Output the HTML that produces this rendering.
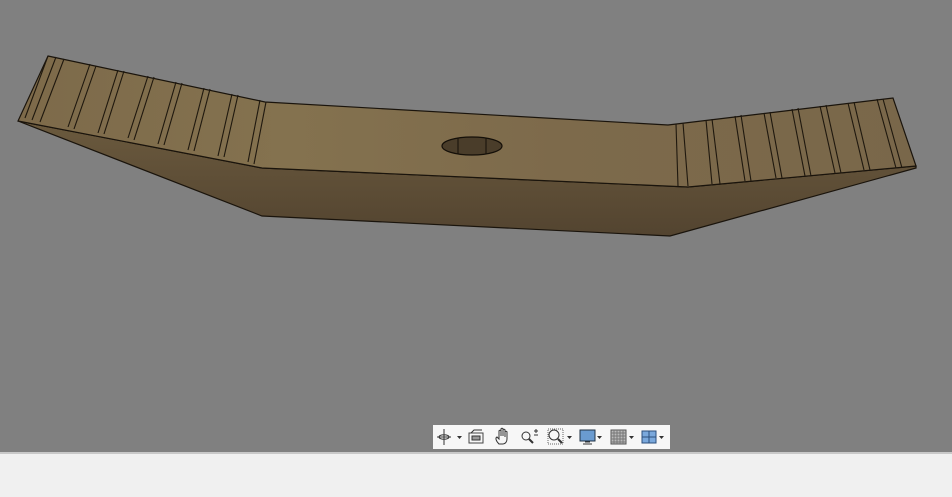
<!DOCTYPE html>
<html><head><meta charset="utf-8"><style>
html,body{margin:0;padding:0;width:952px;height:495px;overflow:hidden;background:#808080;font-family:"Liberation Sans",sans-serif}
#bar{position:absolute;left:0;top:452px;width:952px;height:43px;background:#f0f0f0;border-top:2px solid #c8c8c8}
#tb{position:absolute;left:433px;top:425px;width:237px;height:24px;background:#f7f7f7}
</style></head><body>
<svg width="952" height="452" style="position:absolute;left:0;top:0">
<defs>
<linearGradient id="tg" x1="0" y1="0" x2="1" y2="0">
<stop offset="0" stop-color="#7d6a4a"/><stop offset="0.3" stop-color="#84724f"/><stop offset="0.6" stop-color="#7d6a4b"/><stop offset="1" stop-color="#79674a"/></linearGradient>
<linearGradient id="fg" x1="0" y1="0" x2="0" y2="1">
<stop offset="0" stop-color="#6b5a3e"/><stop offset="1" stop-color="#534430"/></linearGradient>
</defs>
<polygon points="18,121 262,168 688,187 916,166 916,168 670,236 262,216" fill="url(#fg)" stroke="#1a140c" stroke-width="1.2"/>
<polygon points="48,56 265,102 668,125 893,98 916,166 688,187 262,168 18,121" fill="url(#tg)" stroke="#1a140c" stroke-width="1.2"/>
<g stroke="#1f180e" stroke-width="1.1" fill="none">
<line x1="48" y1="56" x2="25" y2="118"/>
<line x1="56" y1="57" x2="32" y2="120"/>
<line x1="64" y1="59" x2="40" y2="122"/>
<line x1="90" y1="64" x2="68" y2="127"/><line x1="96" y1="66" x2="74" y2="129"/>
<line x1="118" y1="70" x2="98" y2="133"/><line x1="124" y1="71" x2="104" y2="134"/>
<line x1="148" y1="76" x2="128" y2="138"/><line x1="154" y1="77" x2="134" y2="140"/>
<line x1="176" y1="82" x2="158" y2="144"/><line x1="182" y1="83" x2="164" y2="145"/>
<line x1="204" y1="88" x2="188" y2="150"/><line x1="210" y1="89" x2="194" y2="151"/>
<line x1="232" y1="94" x2="218" y2="156"/><line x1="238" y1="95" x2="224" y2="157"/>
<line x1="260" y1="100" x2="248" y2="162"/><line x1="266" y1="102" x2="254" y2="164"/>
<line x1="676" y1="124" x2="678" y2="186"/><line x1="683" y1="123" x2="688" y2="186"/>
<line x1="706" y1="120" x2="712" y2="184"/><line x1="712" y1="119" x2="720" y2="184"/>
<line x1="735" y1="116" x2="745" y2="181"/><line x1="741" y1="115" x2="751" y2="181"/>
<line x1="764" y1="113" x2="776" y2="178"/><line x1="770" y1="112" x2="782" y2="178"/>
<line x1="792" y1="109" x2="805" y2="176"/><line x1="798" y1="108" x2="811" y2="176"/>
<line x1="820" y1="106" x2="835" y2="173"/><line x1="826" y1="105" x2="841" y2="173"/>
<line x1="848" y1="103" x2="864" y2="170"/><line x1="854" y1="102" x2="870" y2="170"/>
<line x1="877" y1="99" x2="896" y2="168"/><line x1="883" y1="99" x2="902" y2="168"/>
</g>
<ellipse cx="472" cy="146" rx="30" ry="9" fill="#4a3d2a" stroke="#140f08" stroke-width="1.2"/>
<line x1="458" y1="138" x2="458" y2="154" stroke="#140f08"/>
<line x1="486" y1="138" x2="486" y2="154" stroke="#140f08"/>
</svg>
<div id="tb">
<svg width="237" height="24" style="position:absolute;left:0;top:0" fill="none" stroke="#333" stroke-width="1">
<path d="M11 4v16M4 12h14M6 12c0-3 10-3 10 0s-10 3-10 0"/><path d="M24 11l5 0-2.5 3z" fill="#333" stroke="none"/>
<rect x="36" y="8" width="14" height="10" stroke="#444"/><rect x="39" y="11" width="8" height="4" fill="#999"/><path d="M38 8l3-3h8" />
<path d="M66 19c-3-3-4-6-2-7l2 2v-8c0-1 2-1 2 0v5-7c0-1 2-1 2 0v7-6c0-1 2-1 2 0v7-5c0-1 2-1 2 0v7c0 3-2 5-4 5z"/>
<circle cx="93" cy="11" r="4"/><path d="M96 14l4 4" stroke-width="2"/><path d="M101 6h4M103 4v4M101 10h4"/>
<rect x="115" y="4" width="15" height="15" stroke-dasharray="1 1" stroke="#666"/><circle cx="121" cy="10" r="5"/><path d="M125 14l4 4" stroke-width="2"/>
<path d="M134 11l5 0-2.5 3z" fill="#333" stroke="none"/>
<rect x="147" y="5" width="15" height="11" fill="#6a9bd0" stroke="#234"/><path d="M152 17h5M150 19h9"/><path d="M164 11l5 0-2.5 3z" fill="#333" stroke="none"/>
<rect x="178" y="5" width="15" height="14" fill="#bbb" stroke="#555"/><path d="M181 5v14M184 5v14M187 5v14M190 5v14M178 8h15M178 11h15M178 14h15M178 17h15" stroke="#777"/><path d="M196 11l5 0-2.5 3z" fill="#333" stroke="none"/>
<rect x="209" y="6" width="14" height="12" fill="#7aa8dc" stroke="#2c4f7c"/><path d="M216 6v12M209 12h14" stroke="#2c4f7c"/><path d="M226 11l5 0-2.5 3z" fill="#333" stroke="none"/>
</svg></div>
<div id="bar"></div>
</body></html>
